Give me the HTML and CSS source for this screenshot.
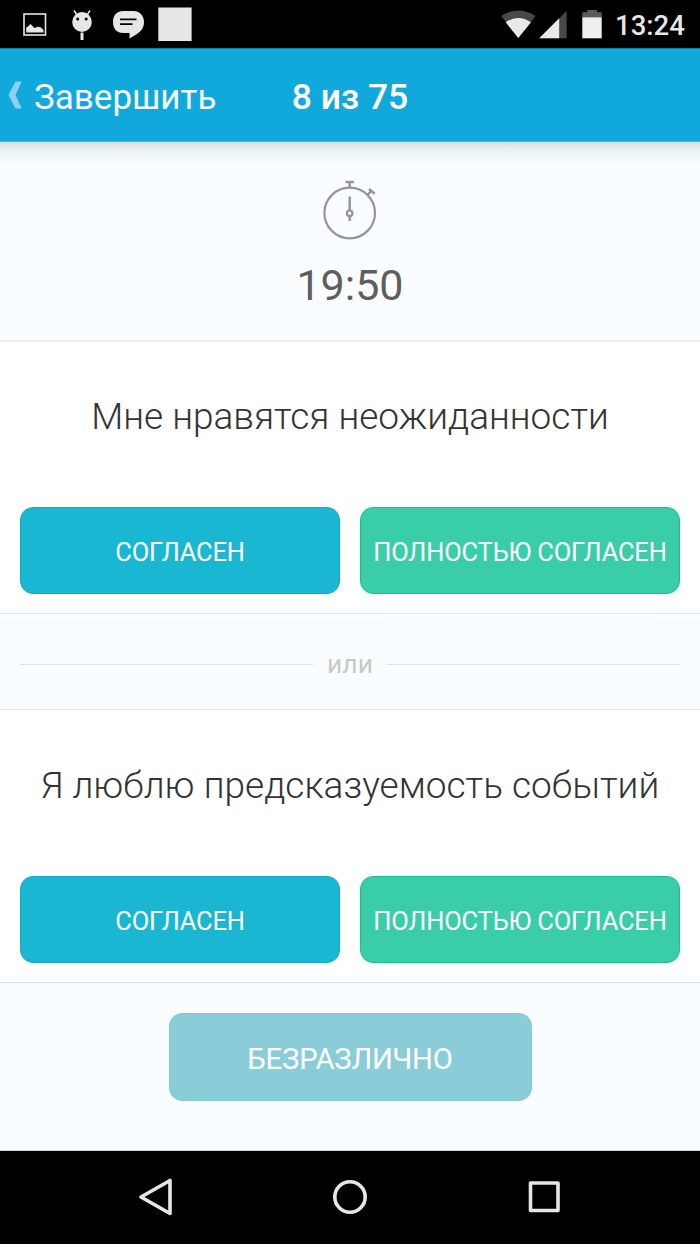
FILE: index.html
```html
<!DOCTYPE html>
<html lang="ru">
<head>
    <meta charset="utf-8">
    <title>8 из 75</title>
    <link rel="stylesheet" href="styles.css">
</head>
<body>
    <div class="status-bar">
        <svg class="notifications" width="200" height="48" viewBox="0 0 200 48">
            <!-- picture -->
            <rect x="24" y="14" width="21.500" height="21" fill="none" stroke="#e6e6e6" stroke-width="1.600"/>
            <path d="M26.200 32.500V27.500L28 26.500L30.500 24L34.500 28L38 26.800L41 27.500L43.500 30V32.500Z" fill="#e6e6e6"/>
            <!-- android -->
            <path d="M74 10.500L77 15M90 10.500L87 15" stroke="#e6e6e6" stroke-width="1.500"/>
            <ellipse cx="82" cy="22" rx="9.800" ry="10" fill="#e6e6e6"/>
            <circle cx="77.700" cy="19" r="1.500"/>
            <circle cx="86.200" cy="19" r="1.500"/>
            <path d="M82 32.500V40" stroke="#e6e6e6" stroke-width="3"/>
            <!-- message -->
            <path d="M123 11H134C140 11 144 16 144 22C144 28 141 31 137 34L129.500 38.500V33H123C117 33 113 29 113 22C113 15 117 11 123 11Z" fill="#e6e6e6"/>
            <path d="M120 19.300H136.500M120 24.200H132.500" stroke="#000" stroke-width="1.800"/>
            <rect x="158.300" y="7.500" width="33.300" height="33.500" fill="#e6e6e6"/>
        </svg>
        <svg class="system" width="110" height="48" viewBox="0 0 110 48">
            <!-- wifi -->
            <path d="M0.200 16Q17.200 5 34.500 16L17.300 38Z" fill="#484848"/>
            <path d="M4.700 22.300Q17.200 13.500 30 22.300L17.300 38Z" fill="#e9e9e9"/>
            <!-- signal -->
            <path d="M38.200 38.200L65.700 11V38.200Z" fill="#484848"/>
            <path d="M38.200 38.200L58.200 18.300V38.200Z" fill="#e9e9e9"/>
            <!-- battery -->
            <path d="M81.300 17.500V12.300H86.300V10H96V12.300H100.700V17.500Z" fill="#5c5c5c"/>
            <rect x="81.300" y="17.300" width="19.400" height="21" fill="#efefef"/>
        </svg>
        <span class="clock">13:24</span>
    </div>

    <div class="header">
        <a class="back">
            <svg width="14" height="28" viewBox="0 0 14 28"><path d="M7.500 0.500H13.700L7.500 14L13.700 27.500H7.500L0.500 14Z" fill="#8bd2ee"/></svg>
            <span>Завершить</span>
        </a>
        <h1>8 из 75</h1>
    </div>

    <div class="timer">
        <svg width="56" height="60" viewBox="0 0 56 60" fill="none" stroke="#969696" stroke-width="2.200">
            <circle cx="27.700" cy="33" r="25.300"/>
            <path d="M23.500 2H31.800M27.700 2V7.500M45.500 15L49.500 10.500M47 9L52.700 13.800" stroke-width="2.500"/>
            <path d="M27.700 16.500V30.500M27.700 36V41" stroke-width="2.500"/>
            <circle cx="27.700" cy="33.300" r="2.800"/>
        </svg>
        <div class="time">19:50</div>
    </div>

    <div class="statement">
        <p>Мне нравятся неожиданности</p>
        <div class="buttons">
            <button class="btn agree">СОГЛАСЕН</button>
            <button class="btn strong">ПОЛНОСТЬЮ СОГЛАСЕН</button>
        </div>
    </div>

    <div class="divider"><span>или</span></div>

    <div class="statement">
        <p>Я люблю предсказуемость событий</p>
        <div class="buttons">
            <button class="btn agree">СОГЛАСЕН</button>
            <button class="btn strong">ПОЛНОСТЬЮ СОГЛАСЕН</button>
        </div>
    </div>

    <div class="neutral">
        <button class="btn indifferent">БЕЗРАЗЛИЧНО</button>
    </div>

    <div class="nav-bar">
        <svg width="36" height="40" viewBox="0 0 36 40"><path d="M32 3.500V36.500L3 20Z"/></svg>
        <svg width="36" height="40" viewBox="0 0 36 40"><circle cx="18" cy="20" r="15.200"/></svg>
        <svg width="36" height="40" viewBox="0 0 36 40"><rect x="4.500" y="6" width="27.500" height="27.500"/></svg>
    </div>
</body>
</html>
```
FILE: styles.css
```css
* {
    box-sizing: border-box;
}
body {
    margin: 0;
    width: 700px;
    height: 1244px;
    display: flex;
    flex-direction: column;
    overflow: hidden;
    font-family: Roboto, sans-serif;
    background-color: #f9fdff;
}
svg {
    display: block;
    flex: none;
}
.status-bar {
    height: 48px;
    display: flex;
    background-color: #000;
}
.system {
    margin-left: 301px;
}
.clock {
    margin-left: 4px;
    line-height: 51px;
    font-size: 27.5px;
    font-weight: 500;
    color: #e6e6e6;
}
.header {
    height: 94px;
    padding-top: 3px;
    display: grid;
    grid-template-columns: 1fr auto 1fr;
    align-items: center;
    background-color: #11a8dc;
    border-top: 1px solid #0d7ca3;
    border-bottom: 1px solid #5fb4d2;
    color: #f3f8fb;
}
.back {
    display: flex;
    align-items: center;
    gap: 12px;
    padding-left: 8px;
    font-size: 35px;
}
.back svg {
    margin-top: -3px;
}
.back span {
    padding-top: 2px;
}
.header h1 {
    margin: 0;
    font-size: 35.5px;
    font-weight: 500;
    color: #fff;
}
.timer {
    height: 200px;
    padding-top: 38px;
    display: flex;
    flex-direction: column;
    align-items: center;
    background: linear-gradient(#d5dade, #e8edf0 6px, #f3f7fa 14px, #f9fdff 26px);
    border-bottom: 2px solid #e6f1f6;
}
.time {
    margin-top: 18px;
    font-size: 43px;
    line-height: 54px;
    color: #5e5e5e;
}
.statement {
    height: 271px;
    padding: 0 20px 19px;
    display: flex;
    flex-direction: column;
    background-color: #fff;
}
.statement p {
    margin: 0;
    flex: 1;
    padding-top: 51px;
    font-size: 37px;
    font-weight: 300;
    line-height: 48px;
    text-align: center;
    white-space: nowrap;
    color: #333;
}
.buttons {
    display: grid;
    grid-template-columns: 1fr 1fr;
    gap: 20px;
}
.btn {
    height: 87px;
    padding: 2px 0 0;
    border: 1px solid;
    border-radius: 13px;
    font-family: inherit;
    font-size: 25.5px;
    letter-spacing: -0.2px;
    white-space: nowrap;
    color: #fff;
}
.agree {
    background-color: #1ab7d2;
    border-color: #12a9c9;
}
.strong {
    background-color: #39cda8;
    border-color: #18bf96;
}
.divider {
    height: 97px;
    padding: 5px 20px 0;
    display: flex;
    align-items: center;
    gap: 14px;
    border-top: 1px solid #dcebf1;
    border-bottom: 1px solid #dcebf1;
    font-size: 26.5px;
    color: #c8c9c9;
}
.divider span {
    padding-bottom: 2px;
}
.divider::before,
.divider::after {
    content: "";
    flex: 1;
    height: 1px;
    margin-top: 1px;
    background-color: #dde1e1;
}
.divider + .statement {
    height: 272px;
}
.divider + .statement p {
    padding-top: 52px;
}
.neutral {
    height: 169px;
    padding-top: 30px;
    border-top: 1px solid #d2e7f0;
    border-bottom: 1px solid #cdd3d5;
    text-align: center;
}
.indifferent {
    width: 363px;
    height: 88px;
    padding-top: 3px;
    font-size: 29.3px;
    background-color: #8acdd8;
    border-color: #86c9d5;
}
.nav-bar {
    flex: 1;
    padding-bottom: 1px;
    display: flex;
    justify-content: center;
    align-items: center;
    gap: 158px;
    background-color: #000;
}
.nav-bar svg {
    fill: none;
    stroke: #e6e6e6;
    stroke-width: 3.6;
    stroke-linejoin: round;
}
```
